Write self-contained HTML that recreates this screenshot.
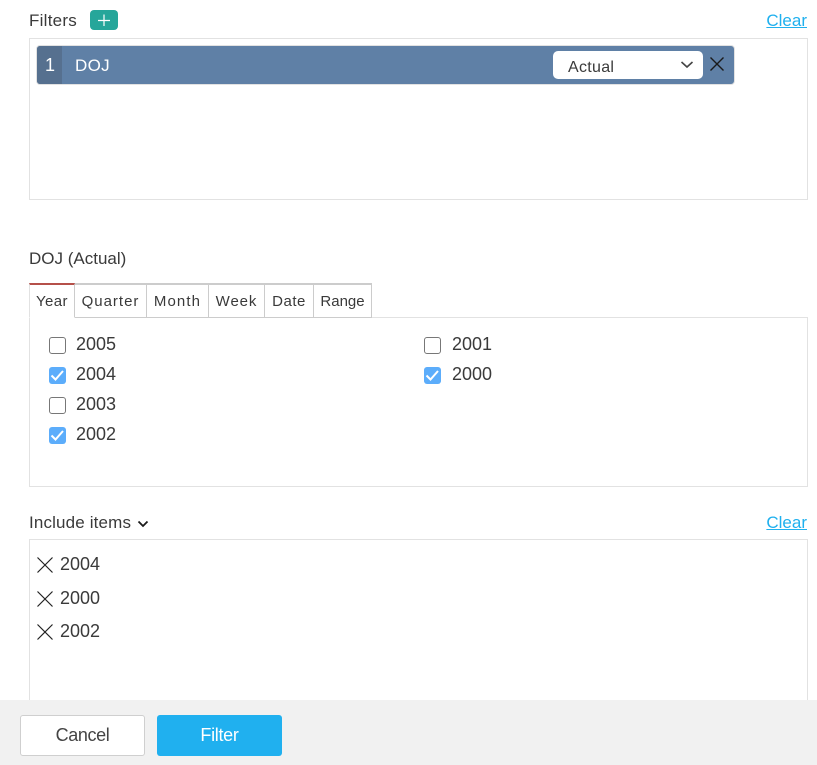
<!DOCTYPE html>
<html><head><meta charset="utf-8">
<style>
html,body{margin:0;padding:0;background:#fff;}
body{width:817px;height:765px;position:relative;overflow:hidden;font-family:"Liberation Sans",sans-serif;color:#3a3a3a;font-size:17px;}
.a{position:absolute;white-space:nowrap;line-height:20px;}
.box{position:absolute;box-sizing:border-box;border:1px solid #e2e2e2;background:#fff;}
.link{color:#1fb0ee;text-decoration:underline;font-size:17px;}
.tab{position:absolute;top:283px;height:35px;box-sizing:border-box;border:1px solid #ccc;border-top-width:2px;border-left:0;background:#fff;font-size:15px;line-height:34px;text-align:center;color:#3a3a3a;white-space:nowrap;}
.cb{position:absolute;width:17px;height:17px;box-sizing:border-box;border:1px solid #777;border-radius:3px;background:#fff;}
.cb.on{border:0;background:#5cadfb;}
.cb svg{position:absolute;left:0;top:0;}
.n{font-size:18px;}
</style></head><body>

<div class="a" style="left:29px;top:11px;letter-spacing:.25px">Filters</div>
<div style="position:absolute;left:90px;top:10px;width:28px;height:20px;background:#26a69a;border-radius:4px">
<svg width="28" height="20" style="position:absolute;left:0;top:0"><path d="M14 4.5V16M8 10.5H20" stroke="#fff" stroke-width="1.2" fill="none"/></svg></div>
<div class="a link" style="right:10px;top:11px">Clear</div>

<div class="box" style="left:29px;top:38px;width:779px;height:162px"></div>
<div style="position:absolute;left:36px;top:45px;width:699px;height:40px;box-sizing:border-box;border:1px solid #e2e2e2;border-radius:4px;background:#5f80a6;overflow:hidden">
  <div style="position:absolute;left:0;top:0;width:25px;height:38px;background:#56708f;color:#fff;text-align:center;font-size:18px;line-height:38px;padding-left:1px;box-sizing:border-box">1</div>
  <div style="position:absolute;left:38px;top:0;color:#fff;font-size:17px;line-height:40px;letter-spacing:.3px">DOJ</div>
  <div style="position:absolute;left:516px;top:5px;width:150px;height:28px;background:#fff;border-radius:5px">
    <div style="position:absolute;left:15px;top:0;font-size:16px;line-height:33px;letter-spacing:.3px;color:#3a3a3a">Actual</div>
    <svg width="14" height="10" style="position:absolute;left:127px;top:9px"><path d="M1.5 2L7 7L12.5 2" stroke="#444" stroke-width="1.6" fill="none"/></svg>
  </div>
  <svg width="16" height="16" style="position:absolute;left:672px;top:10px"><path d="M1.5 1.5L14.5 14.5M14.5 1.5L1.5 14.5" stroke="#1a1a1a" stroke-width="1.4" fill="none"/></svg>
</div>

<div class="a" style="left:29px;top:249px">DOJ (Actual)</div>

<div class="box" style="left:29px;top:317px;width:779px;height:170px"></div>
<div class="tab" style="left:29px;width:46px;border-top-color:#b5504a;border-left:1px solid #e2e2e2;border-bottom-color:#fff;letter-spacing:.4px">Year</div>
<div class="tab" style="left:75px;width:72px;letter-spacing:1px">Quarter</div>
<div class="tab" style="left:147px;width:62px;letter-spacing:1.1px">Month</div>
<div class="tab" style="left:209px;width:56px;letter-spacing:.9px">Week</div>
<div class="tab" style="left:265px;width:49px;letter-spacing:.5px">Date</div>
<div class="tab" style="left:313px;width:59px;border-left:1px solid #ccc">Range</div>

<div class="cb" style="left:49px;top:337px"></div><div class="a n" style="left:76px;top:334px">2005</div>
<div class="cb on" style="left:49px;top:367px"><svg width="17" height="17"><path d="M2.5 8.5L6.5 12.5L14 4" stroke="#fff" stroke-width="2" fill="none"/></svg></div><div class="a n" style="left:76px;top:364px">2004</div>
<div class="cb" style="left:49px;top:397px"></div><div class="a n" style="left:76px;top:394px">2003</div>
<div class="cb on" style="left:49px;top:427px"><svg width="17" height="17"><path d="M2.5 8.5L6.5 12.5L14 4" stroke="#fff" stroke-width="2" fill="none"/></svg></div><div class="a n" style="left:76px;top:424px">2002</div>
<div class="cb" style="left:424px;top:337px"></div><div class="a n" style="left:452px;top:334px">2001</div>
<div class="cb on" style="left:424px;top:367px"><svg width="17" height="17"><path d="M2.5 8.5L6.5 12.5L14 4" stroke="#fff" stroke-width="2" fill="none"/></svg></div><div class="a n" style="left:452px;top:364px">2000</div>

<div class="a" style="left:29px;top:513px;letter-spacing:.15px">Include items</div>
<svg width="12" height="8" style="position:absolute;left:137px;top:520px"><path d="M1.5 1.5L6 6L10.5 1.5" stroke="#1a1a1a" stroke-width="1.8" fill="none"/></svg>
<div class="a link" style="right:10px;top:513px">Clear</div>

<div class="box" style="left:29px;top:539px;width:779px;height:190px"></div>
<svg width="16" height="16" style="position:absolute;left:37px;top:557px"><path d="M.5 .5L15.5 15.5M15.5 .5L.5 15.5" stroke="#222" stroke-width="1.2" fill="none"/></svg>
<div class="a n" style="left:60px;top:554px">2004</div>
<svg width="16" height="16" style="position:absolute;left:37px;top:591px"><path d="M.5 .5L15.5 15.5M15.5 .5L.5 15.5" stroke="#222" stroke-width="1.2" fill="none"/></svg>
<div class="a n" style="left:60px;top:588px">2000</div>
<svg width="16" height="16" style="position:absolute;left:37px;top:624px"><path d="M.5 .5L15.5 15.5M15.5 .5L.5 15.5" stroke="#222" stroke-width="1.2" fill="none"/></svg>
<div class="a n" style="left:60px;top:621px">2002</div>

<div style="position:absolute;left:0;top:700px;width:817px;height:65px;background:#f1f1f1"></div>
<div style="position:absolute;left:20px;top:715px;width:125px;height:41px;box-sizing:border-box;border:1px solid #cfcfcf;border-radius:3px;background:#fff;text-align:center;line-height:38px;font-size:18px;letter-spacing:-.4px;color:#444">Cancel</div>
<div style="position:absolute;left:157px;top:715px;width:125px;height:41px;border-radius:3px;background:#20b0ef;text-align:center;line-height:40px;font-size:18px;letter-spacing:-.3px;color:#fff">Filter</div>

</body></html>
